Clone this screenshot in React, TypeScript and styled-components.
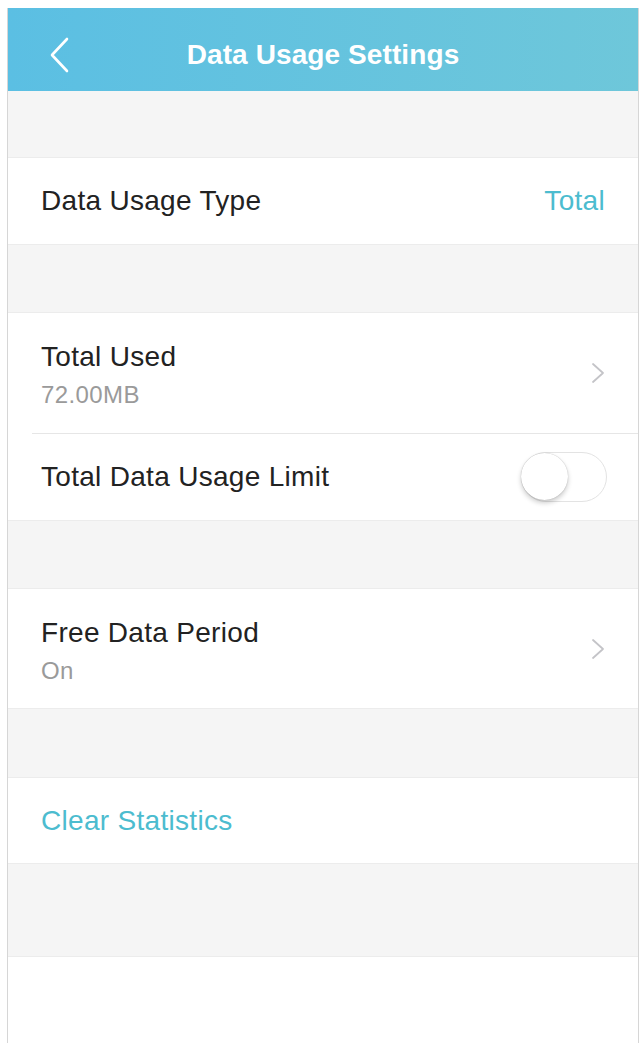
import React, { useState } from "react";
import styled, { createGlobalStyle } from "styled-components";

const GlobalStyle = createGlobalStyle`
  html, body {
    margin: 0;
    padding: 0;
    background: #ffffff;
  }
  body {
    font-family: "Liberation Sans", Arial, sans-serif;
  }
`;

const Frame = styled.div`
  margin: 8px 1px 0 7px;
  border-left: 1px solid #d6d6d6;
  border-right: 1px solid #d6d6d6;
  height: 1035px;
  background: #ffffff;
  display: flex;
  flex-direction: column;
`;

const Header = styled.header`
  height: 83px;
  flex-shrink: 0;
  box-sizing: border-box;
  padding-top: 10px;
  background: linear-gradient(90deg, #5bbfe3 0%, #6ec7da 100%);
  display: flex;
  align-items: center;
  justify-content: center;
  position: relative;
`;

const BackButton = styled.button`
  position: absolute;
  left: 36px;
  top: 28px;
  width: 30px;
  height: 40px;
  border: none;
  background: none;
  padding: 0;
  cursor: pointer;
`;

const Title = styled.h1`
  margin: 0;
  font-size: 28px;
  font-weight: 600;
  color: #ffffff;
  letter-spacing: 0.1px;
`;

const Gap = styled.div<{ $h: number }>`
  height: ${(p) => p.$h}px;
  flex-shrink: 0;
  background: #f5f5f5;
  border-bottom: 1px solid #ececec;
`;

const Group = styled.section`
  background: #ffffff;
  border-bottom: 1px solid #ececec;
`;

const Row = styled.div<{ $h: number; $divider?: boolean }>`
  height: ${(p) => p.$h}px;
  margin-left: 24px;
  padding-left: 9px;
  padding-right: 33px;
  display: flex;
  align-items: center;
  justify-content: space-between;
  box-sizing: border-box;
  border-bottom: ${(p) => (p.$divider ? "1px solid #e6e6e6" : "none")};
`;

const TextBlock = styled.div`
  display: flex;
  flex-direction: column;
  gap: 8px;
  padding-top: 4px;
`;

const Label = styled.span<{ $accent?: boolean }>`
  font-size: 28px;
  letter-spacing: 0.3px;
  color: ${(p) => (p.$accent ? "#4cbccf" : "#222222")};
  line-height: 32px;
`;

const SubLabel = styled.span`
  font-size: 24px;
  letter-spacing: 0.4px;
  color: #9a9a9a;
  line-height: 28px;
`;

const Value = styled.span`
  font-size: 28px;
  letter-spacing: 0.3px;
  color: #4cbccf;
`;

const Toggle = styled.button<{ $on: boolean }>`
  width: 86px;
  height: 50px;
  border-radius: 25px;
  border: 1.5px solid #e3e3e3;
  background: ${(p) => (p.$on ? "#4cbccf" : "#ffffff")};
  position: relative;
  padding: 0;
  margin-right: -2px;
  cursor: pointer;
`;

const Knob = styled.span<{ $on: boolean }>`
  position: absolute;
  top: 0px;
  left: ${(p) => (p.$on ? "36px" : "-1px")};
  width: 47px;
  height: 47px;
  border-radius: 50%;
  background: #ffffff;
  box-shadow: 0 3px 5px rgba(0, 0, 0, 0.2), 0 0 1px rgba(0, 0, 0, 0.3);
`;

const Filler = styled.div`
  flex: 1;
  background: #ffffff;
`;

const Chevron = () => (
  <svg width="14" height="24" viewBox="0 0 14 24">
    <path
      d="M2 3 L12 12 L2 21"
      fill="none"
      stroke="#c4c4c8"
      strokeWidth="1.8"
      strokeLinecap="round"
      strokeLinejoin="round"
    />
  </svg>
);

export default function App() {
  const [limit, setLimit] = useState(false);

  return (
    <>
      <GlobalStyle />
      <Frame>
        <Header>
          <BackButton aria-label="Back">
            <svg width="24" height="40" viewBox="0 0 24 40">
              <path
                d="M20 3 L5 19 L20 35"
                fill="none"
                stroke="#ffffff"
                strokeWidth="2.6"
                strokeLinecap="round"
                strokeLinejoin="round"
              />
            </svg>
          </BackButton>
          <Title>Data Usage Settings</Title>
        </Header>

        <Gap $h={66} />
        <Group>
          <Row $h={86}>
            <Label>Data Usage Type</Label>
            <Value>Total</Value>
          </Row>
        </Group>

        <Gap $h={67} />
        <Group>
          <Row $h={121} $divider>
            <TextBlock>
              <Label>Total Used</Label>
              <SubLabel>72.00MB</SubLabel>
            </TextBlock>
            <Chevron />
          </Row>
          <Row $h={86}>
            <Label>Total Data Usage Limit</Label>
            <Toggle $on={limit} onClick={() => setLimit(!limit)} aria-label="Toggle limit">
              <Knob $on={limit} />
            </Toggle>
          </Row>
        </Group>

        <Gap $h={67} />
        <Group>
          <Row $h={119}>
            <TextBlock>
              <Label>Free Data Period</Label>
              <SubLabel>On</SubLabel>
            </TextBlock>
            <Chevron />
          </Row>
        </Group>

        <Gap $h={68} />
        <Group>
          <Row $h={85}>
            <Label $accent>Clear Statistics</Label>
          </Row>
        </Group>

        <Gap $h={92} />
        <Filler />
      </Frame>
    </>
  );
}
